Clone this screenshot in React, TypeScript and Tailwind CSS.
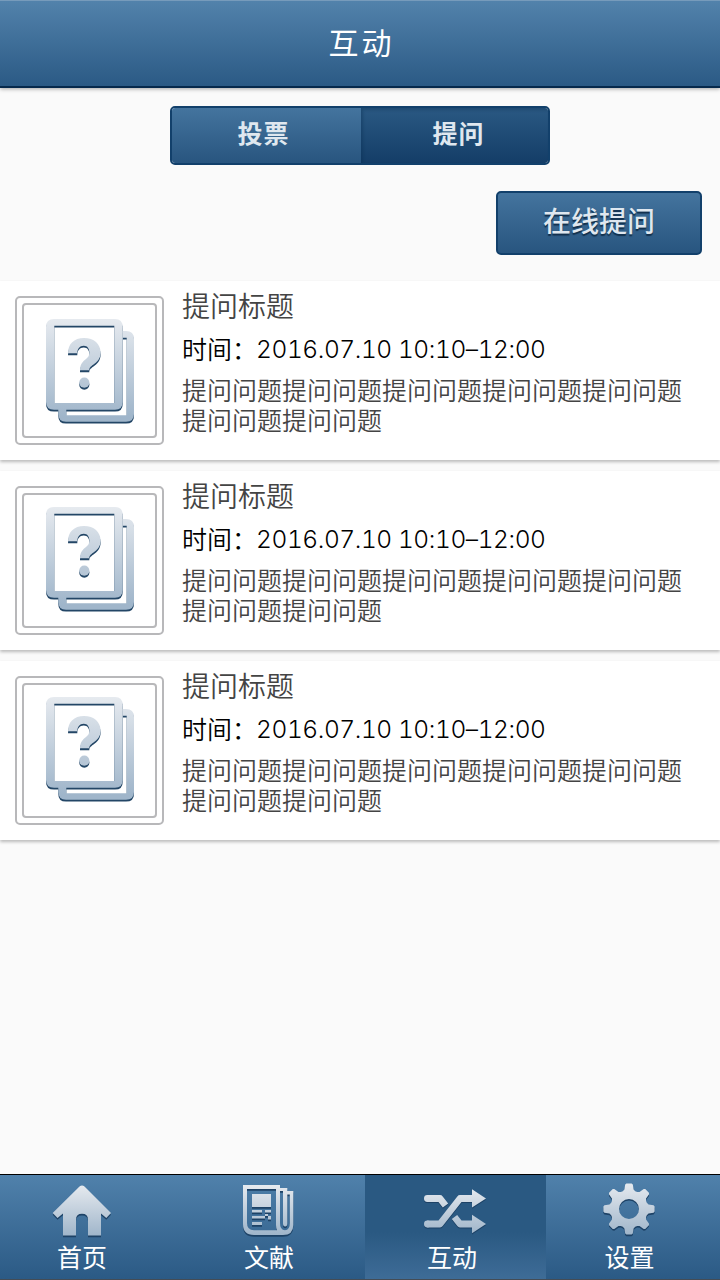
import type { ReactNode } from "react";

const FONT = "font-['Noto_Sans_CJK_SC',sans-serif]";

function MetalDefs({ id, height }: { id: string; height: number }) {
  return (
    <defs>
      <linearGradient id={id} gradientUnits="userSpaceOnUse" x1="0" y1="0" x2="0" y2={height}>
        <stop offset="0" stopColor="#e6eaef" />
        <stop offset="1" stopColor="#9fb5ca" />
      </linearGradient>
    </defs>
  );
}

function QuestionPages() {
  const shapes = (
    <>
      <path
        fillRule="evenodd"
        d="M8 0H69Q76.7 0 76.7 8V83Q76.7 90.7 69 90.7H8Q0 90.7 0 83V8Q0 0 8 0ZM8.3 6.7V84H68.3V6.7Z"
      />
      <path d="M76.7 12H80Q88 12 88 20V95Q88 102.7 80 102.7H20Q12.3 102.7 12.3 95V90H20.3V96.3H80.7V18.7H76.7Z" />
      <path d="M22 34.3C22 25 28 19 38 19C48 19 54.6 25 54.6 33.5C54.6 40 51 43 47.5 45.5C44 48 43.3 49 43.3 51.3H34C34 45.5 36.5 42.5 40 40C42.5 38 43.3 36.5 43.3 33.5C43.3 29.5 41.5 26.7 37.8 26.7C33.5 26.7 31.3 30 31.3 34.3Z" />
      <circle cx="38.3" cy="63.7" r="5.1" />
    </>
  );
  return (
    <svg width="90" height="106" viewBox="0 0 90 106" aria-hidden="true">
      <MetalDefs id="pages" height={98} />
      <g fill="#234666" transform="translate(0 1.9)">{shapes}</g>
      <g fill="url(#pages)">{shapes}</g>
    </svg>
  );
}

function HomeIcon() {
  const d =
    "M27.5 1.6Q30 -.4 32.5 1.6L59 28L54.3 33L49 28.5V50.5H36V34.5Q36 28.7 30 28.7Q24 28.7 24 34.5V50.5H11V28.5L5.5 33L.7 28Z";
  return (
    <svg width="60" height="54" viewBox="0 0 60 54" aria-hidden="true">
      <MetalDefs id="home" height={51} />
      <path d={d} fill="#1d4266" transform="translate(0 1.8)" />
      <path d={d} fill="url(#home)" />
    </svg>
  );
}

function NewsIcon() {
  const shapes = (
    <>
      <path
        fillRule="evenodd"
        d="M0 0H37V3H44.3V6H50.3V40Q50.3 50 40 50H11Q0 50 0 39ZM4 4V38Q4 45.3 11 45.3H34Q33 43 33 40V4ZM37 6V38Q37 45.3 42 45.3Q46.8 45.3 46.8 38V9.5H44.3V38.5Q44.3 41.5 42.2 41.5Q40 41.5 40 38.5V6Z"
      />
      <path d="M9 9H28V22H9ZM9 25H19V27.5H9ZM22 25H28V27.5H22ZM9 31H22V33.5H9ZM25 31H28V34.5H25ZM22 29H25V31H22ZM9 37H19V40H9Z" />
    </>
  );
  return (
    <svg width="51" height="53" viewBox="0 0 51 53" aria-hidden="true">
      <MetalDefs id="news" height={50} />
      <g fill="#1d4266" transform="translate(0 1.8)">{shapes}</g>
      <g fill="url(#news)">{shapes}</g>
    </svg>
  );
}

function ShuffleIcon() {
  const shapes = (
    <>
      <path d="M3.2 10.5H16L21.5 17.5M30.5 29L36 36H49" fill="none" strokeWidth="6.8" strokeLinejoin="round" />
      <path d="M3.2 36H16L36 10.5H49" fill="none" strokeWidth="6.8" strokeLinejoin="round" />
      <circle cx="3.4" cy="10.5" r="3.4" stroke="none" />
      <circle cx="3.4" cy="36" r="3.4" stroke="none" />
      <path d="M48 1.2L62 10.5L48 19.5ZM48 26.8L62 36L48 45.2Z" stroke="none" />
    </>
  );
  return (
    <svg width="62" height="48" viewBox="0 0 62 48" aria-hidden="true">
      <MetalDefs id="shuffle" height={46} />
      <g fill="#1d4266" stroke="#1d4266" transform="translate(0 1.2)">
        {shapes}
      </g>
      <g fill="url(#shuffle)" stroke="url(#shuffle)">
        {shapes}
      </g>
    </svg>
  );
}

function gearPath() {
  const points: string[] = [];
  for (let i = 0; i < 8; i++) {
    const a = (i * Math.PI) / 4;
    const corners = [
      [-6.2, 17.8],
      [-4.6, 19.5],
      [-3.8, 24.6],
      [-2.6, 25.6],
      [2.6, 25.6],
      [3.8, 24.6],
      [4.6, 19.5],
      [6.2, 17.8],
    ];
    for (const [t, r] of corners) {
      const x = 26 + r * Math.sin(a) + t * Math.cos(a);
      const y = 26 - r * Math.cos(a) + t * Math.sin(a);
      points.push(`${x.toFixed(2)} ${y.toFixed(2)}`);
    }
  }
  return `M${points.join("L")}ZM36 26A10 10 0 1 0 16 26A10 10 0 1 0 36 26Z`;
}

function GearIcon() {
  const d = gearPath();
  return (
    <svg width="52" height="54" viewBox="0 0 52 54" aria-hidden="true">
      <MetalDefs id="gear" height={52} />
      <path d={d} fillRule="evenodd" fill="#1d4266" transform="translate(0 1.6)" />
      <path d={d} fillRule="evenodd" fill="url(#gear)" />
    </svg>
  );
}

function QuestionCard({ iconPad }: { iconPad: string }) {
  return (
    <article className="flex h-[179px] shrink-0 bg-white pl-[15px] pt-[15px] shadow-[0_2px_3px_rgba(0,0,0,0.25)]">
      <div className="h-[149px] w-[149px] shrink-0 rounded-[5px] border-2 border-[#b8b8ba] p-[5px]">
        <div className={`h-full rounded-[4px] border-2 border-[#b8b8ba] pl-[22px] ${iconPad}`}>
          <QuestionPages />
        </div>
      </div>
      <div className="-mt-[15px] ml-[18px] w-[505px]">
        <h2 className="mt-1 h-[42px] text-[28px] font-[350] leading-[41px] text-[#444]">提问标题</h2>
        <p className="flex h-[44px] items-center whitespace-nowrap text-[25px] font-[350] text-black">
          <span>时间：</span>
          <span className="-ml-px mt-px font-['Inter',sans-serif] text-[24.5px] font-light tracking-[-0.42px] tabular-nums">
            2016.07.10 10:10–12:00
          </span>
        </p>
        <p className="mt-[3px] text-[25px] font-[350] leading-[30px] text-[#444]">
          提问问题提问问题提问问题提问问题提问问题提问问题提问问题
        </p>
      </div>
    </article>
  );
}

function NavItem({ label, cell, iconBox, children }: { label: string; cell: string; iconBox: string; children: ReactNode }) {
  return (
    <button type="button" className={`flex h-full flex-col items-center ${cell}`}>
      <span className={`flex h-[64px] items-start ${iconBox}`}>{children}</span>
      <span className="text-[25px] leading-[35px] text-white">{label}</span>
    </button>
  );
}

export default function App() {
  return (
    <div className={`flex h-[1280px] w-[720px] flex-col overflow-hidden bg-[#fafafa] ${FONT}`}>
      <header className="flex h-[88px] shrink-0 items-center justify-center border-b-2 border-t border-b-[#06294c] border-t-[#779bbb] bg-linear-to-b from-[#5282ab] to-[#2b5a85] shadow-[0_1px_4px_rgba(0,0,0,0.35)]">
        <h1 className="pb-[5px] pl-[3px] text-[30px] leading-none tracking-[3px] text-white">互动</h1>
      </header>

      <div className="mx-auto mt-[18px] flex h-[59px] w-[380px] shrink-0 overflow-hidden rounded-[5px] border-2 border-[#12406b] text-[25px] font-bold tracking-[1px] text-[#dfe7ef] [text-shadow:0_2px_1px_#12304d]">
        <button type="button" className="w-[189px] bg-linear-to-b from-[#44749e] to-[#28557f] pb-[6px] pr-[6px]">
          投票
        </button>
        <button
          type="button"
          className="flex-1 bg-linear-to-b from-[#2a5983] to-[#143d67] pb-[6px] pl-[8px] shadow-[inset_2px_2px_3px_rgba(10,45,80,0.35)]"
        >
          提问
        </button>
      </div>

      <button
        type="button"
        className="ml-auto mr-[18px] mt-[26px] h-[64px] w-[206px] shrink-0 rounded-[5px] border-2 border-[#12406b] bg-linear-to-b from-[#44749e] to-[#28557f] pb-[6px] text-[28px] font-medium text-[#dfe7ef] [text-shadow:0_2px_1px_#12304d]"
      >
        在线提问
      </button>

      <main className="mt-[26px] flex flex-1 flex-col gap-[11px]">
        <QuestionCard iconPad="pt-[14px]" />
        <QuestionCard iconPad="pt-[12px]" />
        <QuestionCard iconPad="pt-[12px]" />
      </main>

      <nav className="flex h-[106px] shrink-0 border-b border-t border-b-[#444c55] border-t-black bg-linear-to-b from-[#5081ab] to-[#2b5a85]">
        <NavItem label="首页" cell="w-[180px] pr-4" iconBox="pt-[10px]">
          <HomeIcon />
        </NavItem>
        <NavItem label="文献" cell="w-[185px] pr-[7px]" iconBox="pr-[2px] pt-[10px]">
          <NewsIcon />
        </NavItem>
        <NavItem label="互动" cell="w-[181px] pr-[7px] bg-linear-to-b from-[#2a5982] from-55% to-[#3e6c97]" iconBox="pl-[6px] pt-[13px]">
          <ShuffleIcon />
        </NavItem>
        <NavItem label="设置" cell="flex-1 pr-[7px]" iconBox="pr-px pt-[8px]">
          <GearIcon />
        </NavItem>
      </nav>
    </div>
  );
}
